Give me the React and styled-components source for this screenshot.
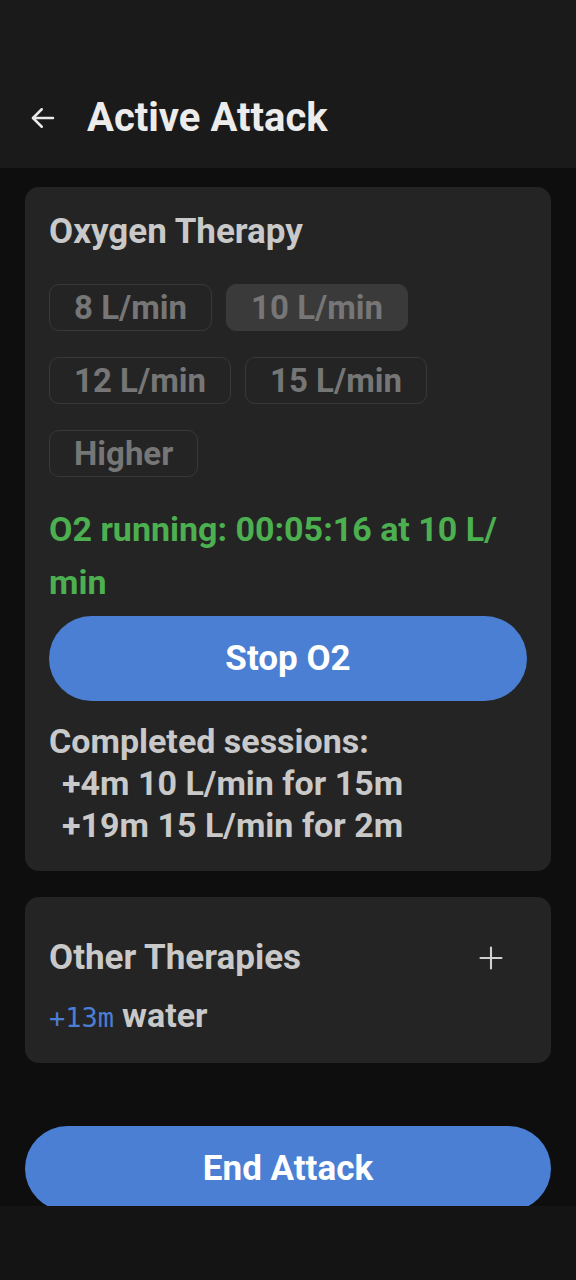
import React from "react";
import styled, { createGlobalStyle } from "styled-components";

const Global = createGlobalStyle`
  html, body { margin: 0; padding: 0; background: #0e0e0e; }
  body { font-family: Roboto, "Noto Sans", sans-serif; }
  * { box-sizing: border-box; }
`;

const Screen = styled.div`
  width: 576px;
  height: 1280px;
  display: flex;
  flex-direction: column;
  background: #0e0e0e;
  overflow: hidden;
`;

const Header = styled.header`
  height: 168px;
  flex: none;
  background: #1a1a1a;
  display: flex;
  align-items: flex-end;
  padding: 0 0 26px 28px;
  gap: 29px;
`;

const BackButton = styled.button`
  background: none;
  border: none;
  padding: 0;
  width: 30px;
  height: 48px;
  display: flex;
  align-items: center;
  color: #e8e8e8;
`;

const Title = styled.h1`
  margin: 0;
  font-size: 40px;
  line-height: 48px;
  font-weight: 700;
  color: #ececec;
`;

const Scroll = styled.main`
  flex: 1;
  overflow: hidden;
  display: flex;
  flex-direction: column;
  padding: 19px 25px 0;
  gap: 26px;
`;

const Card = styled.section`
  background: #242424;
  border-radius: 14px;
  padding: ${(p) => p.$pad || "24px"};
  display: flex;
  flex-direction: column;
`;

const CardTitle = styled.h2`
  margin: 0;
  font-size: 35px;
  line-height: 40px;
  font-weight: 700;
  color: #c9c9c9;
`;

const ChipWrap = styled.div`
  display: flex;
  flex-wrap: wrap;
  column-gap: 14px;
  row-gap: 26px;
  margin-top: 32px;
`;

const Chip = styled.button`
  height: 47px;
  padding: 0 24px;
  border-radius: 10px;
  border: 1.5px solid ${(p) => (p.$active ? "#3a3a3a" : "#383838")};
  background: ${(p) => (p.$active ? "#3a3a3a" : "transparent")};
  color: #767676;
  font-family: Roboto, sans-serif;
  font-size: 33px;
  font-weight: 700;
  line-height: 1;
`;

const Running = styled.p`
  margin: 26px 0 7px;
  color: #4caf50;
  font-size: 34px;
  line-height: 53px;
  font-weight: 700;
`;

const PillButton = styled.button`
  width: 100%;
  height: 85px;
  border: none;
  border-radius: 43px;
  background: #4a7fd4;
  color: #ffffff;
  font-family: Roboto, sans-serif;
  font-size: 35px;
  font-weight: 700;
  flex: none;
  margin-top: ${(p) => p.$offset || "0px"};
`;

const Sessions = styled.div`
  margin-top: 19px;
  color: #c9c9c9;
  font-size: 34px;
  line-height: 42px;
  font-weight: 700;
`;

const SessionLine = styled.div`
  padding-left: ${(p) => (p.$indent ? "13px" : "0")};
`;

const TitleRow = styled.div`
  display: flex;
  align-items: center;
  justify-content: space-between;
  padding-right: 22px;
`;

const PlusButton = styled.button`
  background: none;
  border: none;
  padding: 0;
  color: #d0d0d0;
  display: flex;
`;

const TherapyRow = styled.div`
  display: flex;
  align-items: baseline;
  gap: 8px;
  margin-top: 17px;
  line-height: 40px;
`;

const Offset = styled.span`
  font-family: "DejaVu Sans Mono", monospace;
  font-size: 27px;
  color: #4a7fd4;
`;

const TherapyName = styled.span`
  font-size: 34px;
  font-weight: 700;
  color: #c9c9c9;
`;

const BottomBar = styled.footer`
  height: 74px;
  flex: none;
  background: #141414;
`;

export default function App() {
  const rates = ["8 L/min", "10 L/min", "12 L/min", "15 L/min", "Higher"];
  const sessions = ["+4m 10 L/min for 15m", "+19m 15 L/min for 2m"];
  return (
    <Screen>
      <Global />
      <Header>
        <BackButton aria-label="Back">
          <svg width="30" height="30" viewBox="0 0 24 24" fill="none" stroke="currentColor" strokeWidth="2" strokeLinecap="round" strokeLinejoin="round">
            <path d="M20 12H4" />
            <path d="M11 5l-7 7 7 7" />
          </svg>
        </BackButton>
        <Title>Active Attack</Title>
      </Header>
      <Scroll>
        <Card $pad="25px 24px 25px">
          <CardTitle>Oxygen Therapy</CardTitle>
          <ChipWrap>
            {rates.map((r) => (
              <Chip key={r} $active={r === "10 L/min"}>{r}</Chip>
            ))}
          </ChipWrap>
          <Running>
            O2 running: 00:05:16 at 10 L/<wbr />min
          </Running>
          <PillButton>Stop O2</PillButton>
          <Sessions>
            <SessionLine>Completed sessions:</SessionLine>
            {sessions.map((s) => (
              <SessionLine key={s} $indent>{s}</SessionLine>
            ))}
          </Sessions>
        </Card>
        <Card $pad="41px 24px 25px">
          <TitleRow>
            <CardTitle>Other Therapies</CardTitle>
            <PlusButton aria-label="Add">
              <svg width="28" height="28" viewBox="0 0 24 24" fill="none" stroke="currentColor" strokeWidth="1.8" strokeLinecap="round">
                <path d="M12 3v18M3 12h18" />
              </svg>
            </PlusButton>
          </TitleRow>
          <TherapyRow>
            <Offset>+13m</Offset>
            <TherapyName>water</TherapyName>
          </TherapyRow>
        </Card>
        <PillButton $offset="37px">End Attack</PillButton>
      </Scroll>
      <BottomBar />
    </Screen>
  );
}
